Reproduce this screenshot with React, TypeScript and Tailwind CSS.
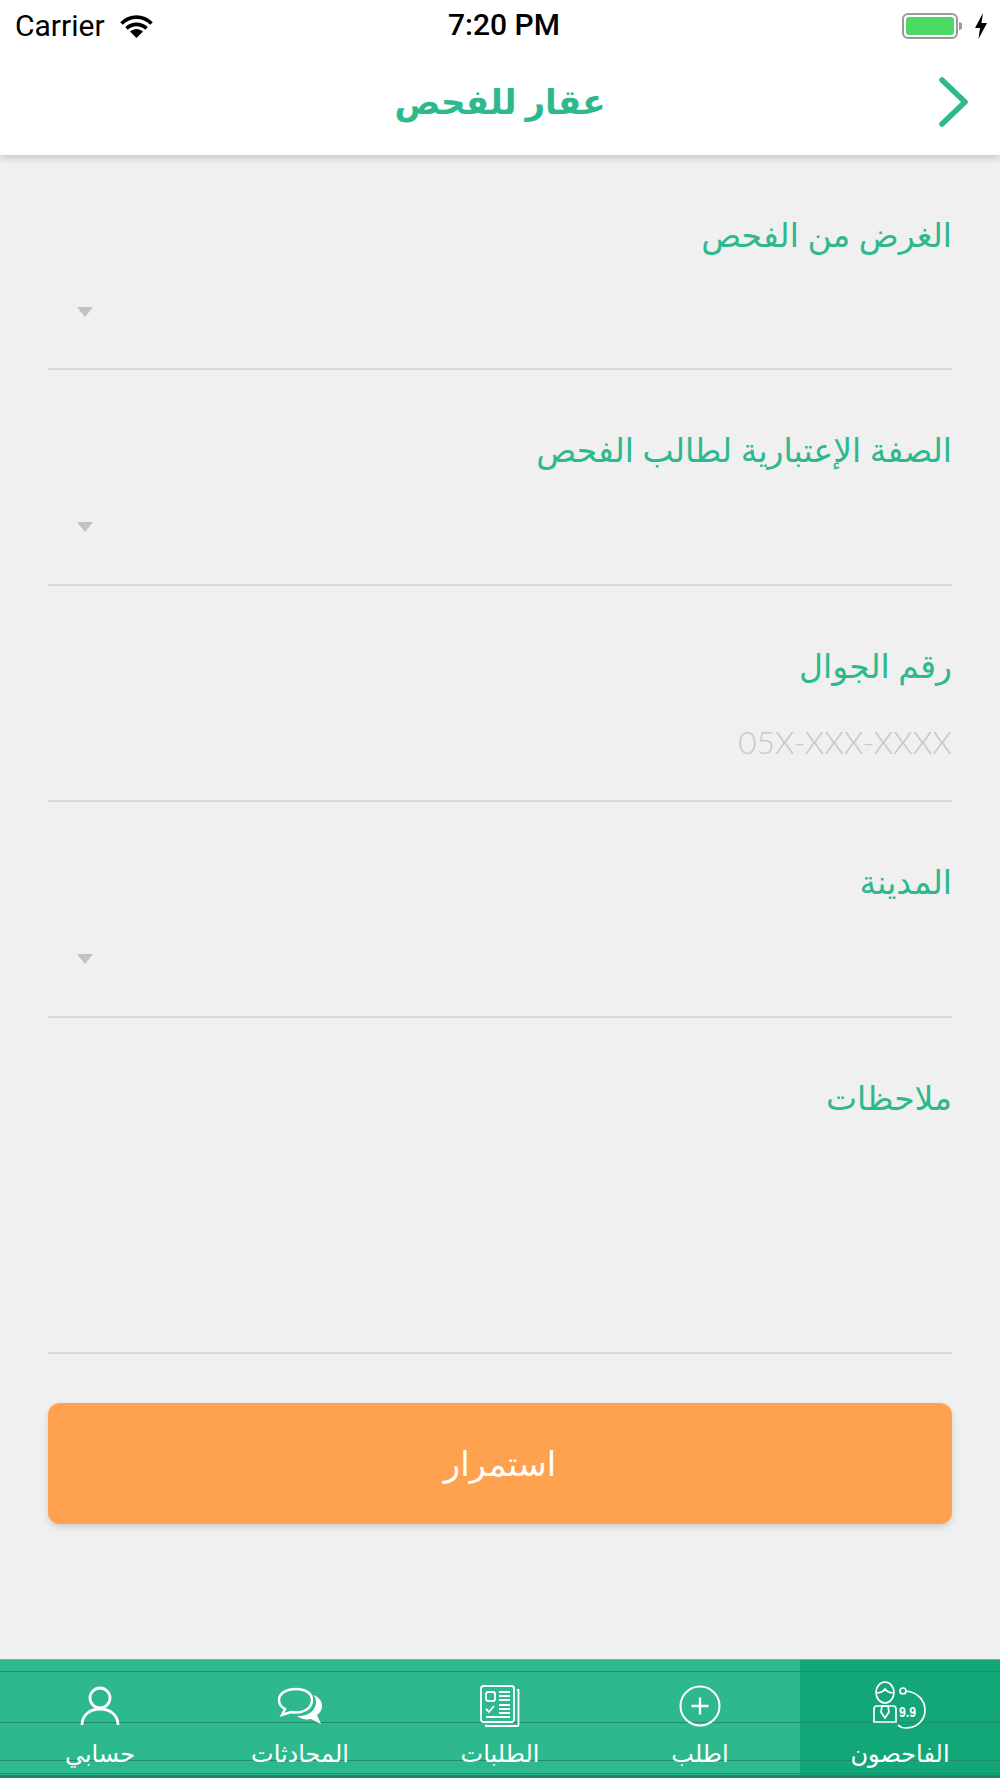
const labelFont = "font-['Open_Sans','DejaVu_Sans',sans-serif]";

function StatusBar() {
  return (
    <div className="relative flex h-[52px] items-center justify-between pl-[15px] pr-[13px] font-['Roboto',sans-serif] text-black">
      <div className="flex items-center gap-[15px]">
        <span className="text-[30px] leading-none">Carrier</span>
        <svg width="33" height="23" viewBox="0 0 33 23" fill="none" stroke="black" strokeWidth="3.6">
          <path d="M1.5 8.5C10 0 23 0 31.5 8.5" />
          <path d="M6.5 13.5C12 8 21 8 26.5 13.5" />
          <path d="M16.5 23 L10 16.5C14 13 19 13 23 16.5Z" fill="black" stroke="none" />
        </svg>
      </div>
      <span className="absolute left-[448px] top-[10px] text-[30px] font-medium leading-[30px]">7:20 PM</span>
      <div className="flex items-center gap-[1px]">
        <div className="flex h-[26px] w-[56px] items-center rounded-[6px] border-2 border-[#9a9a9a] p-[2px]">
          <div className="h-full w-full rounded-[3px] bg-[#4cd964]" />
        </div>
        <div className="mr-[12px] h-[8px] w-[3px] rounded-r-full bg-[#9a9a9a]" />
        <svg width="12" height="26" viewBox="0 0 12 26" fill="black">
          <path d="M8 0 L0 15 H5 L3.5 26 L12 10 H6.5Z" />
        </svg>
      </div>
    </div>
  );
}

function Header() {
  return (
    <header className="relative z-10 h-[155px] shrink-0 bg-white shadow-[0_2px_8px_rgba(0,0,0,0.22)]">
      <StatusBar />
      <div className="relative flex h-[103px] items-start justify-center">
        <h1 dir="rtl" className={`${labelFont} mt-[25px] text-[34px] font-bold leading-[48px] text-[#2db88d]`}>عقار للفحص</h1>
        <svg className="absolute left-[937px] top-[23px]" width="34" height="54" viewBox="0 0 34 54" fill="none" stroke="#2db88d" strokeWidth="5.5" strokeLinecap="round" strokeLinejoin="round">
          <path d="M5 5 L28 27 L5 49" />
        </svg>
      </div>
    </header>
  );
}

function Caret() {
  return <div className="h-0 w-0 border-x-[8px] border-t-[10px] border-x-transparent border-t-[#c2c2c2]" />;
}

function Field({ label, height, caret, placeholder }: { label: string; height: string; caret?: boolean; placeholder?: string }) {
  return (
    <div className={`${height} shrink-0 border-b-2 border-[#d9d9d9] pt-[58px]`}>
      <div dir="rtl" className={`${labelFont} text-[33px] leading-[44px] text-[#2db88d]`}>{label}</div>
      {caret && (
        <div className="ml-[29px] mt-[50px]">
          <Caret />
        </div>
      )}
      {placeholder && (
        <div className="mt-[34px] text-right font-['Lato',sans-serif] text-[31.500px] font-light leading-[40px] text-[#c7c7cd]">{placeholder}</div>
      )}
    </div>
  );
}

function ChatIcon() {
  return (
    <svg width="46" height="38" viewBox="0 0 46 38" fill="none" stroke="white" strokeWidth="2.4">
      <path d="M35 13C35 6 28 2 19 2S2 6 2 13c0 4 2 7 6 9l-3 6 9-3c2 .4 3 .5 5 .5 9 0 16-5 16-12.500Z" />
      <path d="M36 8c6 2 9 6 9 11 0 4-2 7-5 9l4 9-10-5c-5 1-10 0-14-3 10 1 19-5 19-14 0-3-1-5-3-7Z" fill="white" stroke="none" />
    </svg>
  );
}

function RequestsIcon() {
  return (
    <svg width="40" height="42" viewBox="0 0 40 42" fill="none" stroke="white" strokeWidth="1.8">
      <rect x="1" y="1" width="33" height="36" rx="2.500" />
      <path d="M37 5h1.500v35a1 1 0 0 1-1 1H6v-1.500" />
      <rect x="6" y="7" width="9" height="9" rx="2" />
      <path d="M6 24l3 3 5-6" />
      <path d="M19 7h11M19 11h11M19 15h11M19 20h11M19 24h11M19 28h11M6 32h24" strokeWidth="2" />
    </svg>
  );
}

function InspectorIcon() {
  return (
    <svg width="54" height="49" viewBox="0 0 54 49" fill="none" stroke="white" strokeWidth="1.7">
      <ellipse cx="12" cy="11.500" rx="9" ry="10.500" />
      <path d="M3 12c4 0 7-1 9-4 2 3 5 4 9 4" />
      <path d="M1 41V28a3 3 0 0 1 3-3h16a3 3 0 0 1 3 3v13Z" />
      <path d="M9 25l-1 6 4 6 4-6-1-6Z" />
      <circle cx="30" cy="10" r="3" />
      <path d="M33 10C44 11 52 19 52 29C52 40 43 47 33 47C29 47 27 46 25 44" />
      <text x="26" y="36" fill="white" stroke="none" fontSize="15" fontWeight="700" fontFamily="Liberation Sans, sans-serif" textLength="17" lengthAdjust="spacingAndGlyphs">9.9</text>
    </svg>
  );
}

const tabs = [
  {
    label: "حسابي",
    icon: (
      <svg width="40" height="40" viewBox="0 0 40 40" fill="none" stroke="white" strokeWidth="2.8">
        <circle cx="20" cy="12" r="10" />
        <path d="M2 39C2 29 10 23 20 23s18 6 18 16" />
      </svg>
    ),
  },
  { label: "المحادثات", icon: <ChatIcon /> },
  { label: "الطلبات", icon: <RequestsIcon /> },
  {
    label: "اطلب",
    icon: (
      <svg width="42" height="42" viewBox="0 0 42 42" fill="none" stroke="white" strokeWidth="2">
        <circle cx="21" cy="21" r="19.500" />
        <path d="M21 12.500v17M12.500 21h17" strokeWidth="2.400" />
      </svg>
    ),
  },
  { label: "الفاحصون", icon: <InspectorIcon />, active: true },
];

function TabBar() {
  return (
    <nav className="relative h-[119px] shrink-0 border-t border-[#8fa89f] bg-[#2db88d]">
      <div className="grid h-full grid-cols-5">
        {tabs.map((tab) => (
          <div key={tab.label} className={`flex flex-col items-center pt-[12px] ${tab.active ? "bg-[#13a678]" : ""}`}>
            <div className="relative z-10 flex h-[67px] items-center">{tab.icon}</div>
            <span dir="rtl" className={`${labelFont} relative z-10 -mt-[1px] text-[24px] leading-[30px] text-white`}>{tab.label}</span>
          </div>
        ))}
      </div>
      {/* thin dark rules that run across the whole bar, behind the labels */}
      <div className="absolute inset-x-0 top-[11px] h-px bg-[#1f8f6d]" />
      <div className="absolute inset-x-0 top-[62px] h-px bg-[#1f8f6d]" />
      <div className="absolute inset-x-0 top-[100px] h-px bg-[#1f8f6d]" />
      <div className="absolute inset-x-0 bottom-[4px] h-px bg-[#1f8f6d]" />
      <div className="absolute inset-x-0 bottom-0 h-[3px] bg-[#1f8468]" />
    </nav>
  );
}

export default function App() {
  return (
    <div className="flex h-[1778px] w-[1000px] flex-col overflow-hidden bg-[#f0f0f0]">
      <Header />
      <main className="flex-1 px-[48px]">
        <Field label="الغرض من الفحص" height="h-[215px]" caret />
        <Field label="الصفة الإعتبارية لطالب الفحص" height="h-[216px]" caret />
        <Field label="رقم الجوال" height="h-[216px]" placeholder="05X-XXX-XXXX" />
        <Field label="المدينة" height="h-[216px]" caret />
        <Field label="ملاحظات" height="h-[336px]" />
        <button dir="rtl" className={`${labelFont} mt-[49px] h-[121px] w-full rounded-[12px] bg-[#ffa24f] text-[34px] text-white shadow-[0_3px_6px_rgba(0,0,0,0.15)]`}>
          استمرار
        </button>
      </main>
      <TabBar />
    </div>
  );
}
